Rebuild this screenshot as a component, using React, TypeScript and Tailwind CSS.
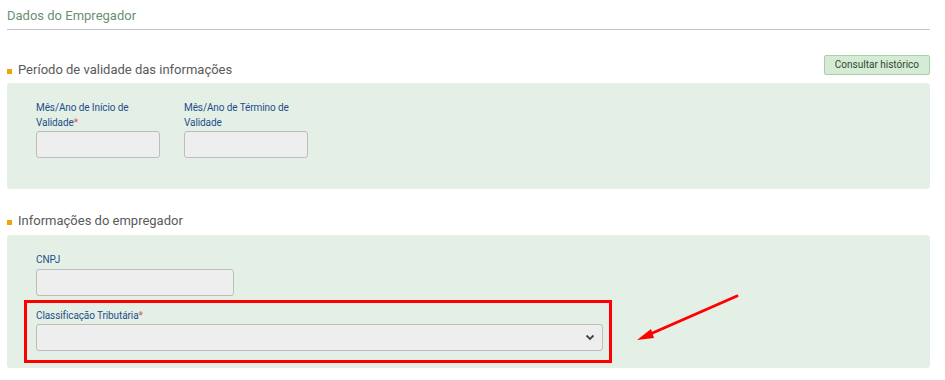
import React from "react";

function Label({ text, required }: { text: string; required?: boolean }) {
  return (
    <div className="text-[10px] leading-[15px] tracking-[-0.1px] text-[#1f4e8c]">
      {text}
      {required && <span className="text-[#d9534f]">*</span>}
    </div>
  );
}

function Input({ w }: { w: string }) {
  return <div className={`${w} h-[27px] rounded-[3px] border border-[#bdbdbd] bg-[#eeeeee]`} />;
}

function SectionTitle({ text }: { text: string }) {
  return (
    <div className="flex items-center text-[13px] leading-[20px] text-[#5a5a5a]">
      <span className="mr-[6px] mt-[3px] inline-block h-[5px] w-[5px] bg-[#f0a30a]" />
      {text}
    </div>
  );
}

export default function App() {
  return (
    <div className="relative h-[380px] w-[945px] overflow-hidden bg-white font-['Roboto',sans-serif]">
      <div className="ml-[7px] w-[923px]">
        {/* Header */}
        <div className="border-b border-[#c3c6d1] pb-[3px] pt-[6px] text-[13px] leading-[20px] text-[#6a8f72]">
          Dados do Empregador
        </div>

        {/* Período de validade */}
        <div className="mt-[25px] flex items-start justify-between">
          <div className="mt-[5px]">
            <SectionTitle text="Período de validade das informações" />
          </div>
          <button className="h-[20px] rounded-[2px] border border-[#a9cfa9] bg-[#d5ebd5] px-[10px] text-[10px] leading-[18px] text-[#2e4a30]">
            Consultar histórico
          </button>
        </div>
        <div className="mt-[3px] h-[106px] rounded-[3px] bg-[#e4f0e5] pl-[29px] pt-[17px]">
          <div className="flex gap-[24px]">
            <div className="w-[124px]">
              <Label text="Mês/Ano de Início de Validade" required />
              <div className="mt-[1px]">
                <Input w="w-[124px]" />
              </div>
            </div>
            <div className="w-[124px]">
              <Label text="Mês/Ano de Término de Validade" />
              <div className="mt-[1px]">
                <Input w="w-[124px]" />
              </div>
            </div>
          </div>
        </div>

        {/* Informações do empregador */}
        <div className="mt-[22px]">
          <SectionTitle text="Informações do empregador" />
        </div>
        <div className="mt-[4px] h-[133px] rounded-[3px] bg-[#e4f0e5] pl-[29px] pt-[17px]">
          <Label text="CNPJ" />
          <div className="mt-[2px]">
            <Input w="w-[198px]" />
          </div>
          <div className="-ml-[12px] mt-[4px] w-[588px] border-[3px] border-[#ff0000] pb-[9px] pl-[9px] pr-[6px] pt-[5px]">
            <Label text="Classificação Tributária" required />
            <div className="mt-[1px] flex h-[27px] items-center justify-end rounded-[3px] border border-[#bdbdbd] bg-[#eeeeee] pr-[7px]">
              <svg width="10" height="7" viewBox="0 0 10 7">
                <path d="M1.5 1.5 L5 5 L8.5 1.5" fill="none" stroke="#444" strokeWidth="1.8" />
              </svg>
            </div>
          </div>
        </div>
      </div>

      {/* Annotation arrow */}
      <svg className="pointer-events-none absolute left-0 top-0" width="945" height="380">
        <line x1="737" y1="296" x2="648" y2="335" stroke="#ff0000" strokeWidth="3" strokeLinecap="round" />
        <polygon points="637,340 651,329 654,338" fill="#ff0000" />
      </svg>
    </div>
  );
}
